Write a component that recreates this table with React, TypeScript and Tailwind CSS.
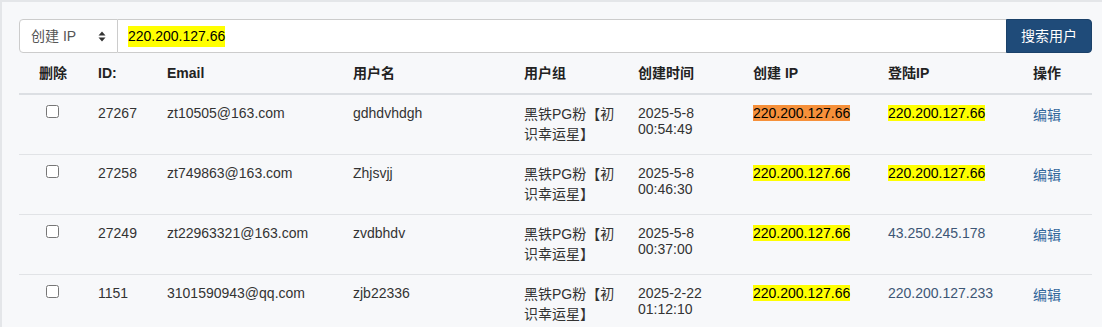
import React from 'react'

interface UserRow {
  id: string
  email: string
  name: string
  group: string
  created: string
  createIp: { text: string; hl?: 'yellow' | 'orange' }
  loginIp: { text: string; hl?: 'yellow' | 'orange' }
}

const rows: UserRow[] = [
  {
    id: '27267',
    email: 'zt10505@163.com',
    name: 'gdhdvhdgh',
    group: '黑铁PG粉【初识幸运星】',
    created: '2025-5-8 00:54:49',
    createIp: { text: '220.200.127.66', hl: 'orange' },
    loginIp: { text: '220.200.127.66', hl: 'yellow' },
  },
  {
    id: '27258',
    email: 'zt749863@163.com',
    name: 'Zhjsvjj',
    group: '黑铁PG粉【初识幸运星】',
    created: '2025-5-8 00:46:30',
    createIp: { text: '220.200.127.66', hl: 'yellow' },
    loginIp: { text: '220.200.127.66', hl: 'yellow' },
  },
  {
    id: '27249',
    email: 'zt22963321@163.com',
    name: 'zvdbhdv',
    group: '黑铁PG粉【初识幸运星】',
    created: '2025-5-8 00:37:00',
    createIp: { text: '220.200.127.66', hl: 'yellow' },
    loginIp: { text: '43.250.245.178' },
  },
  {
    id: '1151',
    email: '3101590943@qq.com',
    name: 'zjb22336',
    group: '黑铁PG粉【初识幸运星】',
    created: '2025-2-22 01:12:10',
    createIp: { text: '220.200.127.66', hl: 'yellow' },
    loginIp: { text: '220.200.127.233' },
  },
]

function Ip({ ip, plainClass }: { ip: UserRow['createIp']; plainClass: string }) {
  if (ip.hl === 'orange') {
    return <span className="text-black bg-[#f6903a]">{ip.text}</span>
  }
  if (ip.hl === 'yellow') {
    return <span className="text-black bg-[#ffff00]">{ip.text}</span>
  }
  return <span className={plainClass}>{ip.text}</span>
}

export default function App() {
  const headers = ['ID:', 'Email', '用户名', '用户组', '创建时间', '创建 IP', '登陆IP', '操作']

  return (
    <div className="min-h-[327px] bg-[#f7f8fa] border-t-2 border-l-2 border-[#e4e6e9] font-['Liberation_Sans','Noto_Sans_CJK_SC',sans-serif] text-[14px] text-[#333]">
      <div className="pt-[17px] pl-[17px] pr-[10px]">
        {/* search bar */}
        <div className="flex h-[34px]">
          <div className="w-[99px] flex items-center justify-between pl-[11px] pr-[11px] bg-white border border-[#ccc] rounded-l-[4px] text-[#555]">
            <span>创建 IP</span>
            <svg width="8" height="11" viewBox="0 0 8 11" className="mt-px">
              <path d="M4 0.5 L7.5 4.5 L0.5 4.5 Z" fill="#333" />
              <path d="M4 10.5 L7.5 6.5 L0.5 6.5 Z" fill="#333" />
            </svg>
          </div>
          <div className="flex-1 flex items-center pl-[10px] bg-white border-y border-[#ccc]">
            <span className="text-black bg-[#ffff00]">220.200.127.66</span>
          </div>
          <button className="w-[86px] bg-[#1f4b79] border border-[#1b4169] text-white rounded-r-[4px]">
            搜索用户
          </button>
        </div>

        {/* users table */}
        <table className="w-full table-fixed border-collapse">
          <colgroup>
            <col className="w-[71px]" />
            <col className="w-[69px]" />
            <col className="w-[186px]" />
            <col className="w-[171px]" />
            <col className="w-[114px]" />
            <col className="w-[115px]" />
            <col className="w-[135px]" />
            <col className="w-[145px]" />
            <col className="w-[67px]" />
          </colgroup>
          <thead>
            <tr>
              <th className="pl-[20px] py-[10px] leading-5 text-left font-bold text-[#222] border-b-2 border-[#dcdfe3]">
                删除
              </th>
              {headers.map((h) => (
                <th
                  key={h}
                  className="px-2 py-[10px] leading-5 text-left font-bold text-[#222] border-b-2 border-[#dcdfe3]"
                >
                  {h}
                </th>
              ))}
            </tr>
          </thead>
          <tbody>
            {rows.map((r) => (
              <tr key={r.id} className="align-top">
                <td className="pl-[27px] py-[10px] border-b border-[#e1e3e6]">
                  <input type="checkbox" readOnly className="block w-[13px] h-[13px]" />
                </td>
                <td className="px-2 py-[10px] leading-4 border-b border-[#e1e3e6]">{r.id}</td>
                <td className="px-2 py-[10px] leading-4 border-b border-[#e1e3e6]">{r.email}</td>
                <td className="px-2 py-[10px] leading-4 border-b border-[#e1e3e6]">{r.name}</td>
                <td className="px-2 py-[10px] leading-[19.5px] border-b border-[#e1e3e6]">{r.group}</td>
                <td className="px-2 py-[10px] leading-4 border-b border-[#e1e3e6]">{r.created}</td>
                <td className="px-2 py-[10px] leading-4 border-b border-[#e1e3e6]">
                  <Ip ip={r.createIp} plainClass="" />
                </td>
                <td className="px-2 py-[10px] leading-4 border-b border-[#e1e3e6]">
                  <Ip ip={r.loginIp} plainClass="text-[#3d5675]" />
                </td>
                <td className="px-2 py-[10px] leading-5 border-b border-[#e1e3e6]">
                  <a href="#" className="text-[#32669b]">编辑</a>
                </td>
              </tr>
            ))}
          </tbody>
        </table>
      </div>
    </div>
  )
}
